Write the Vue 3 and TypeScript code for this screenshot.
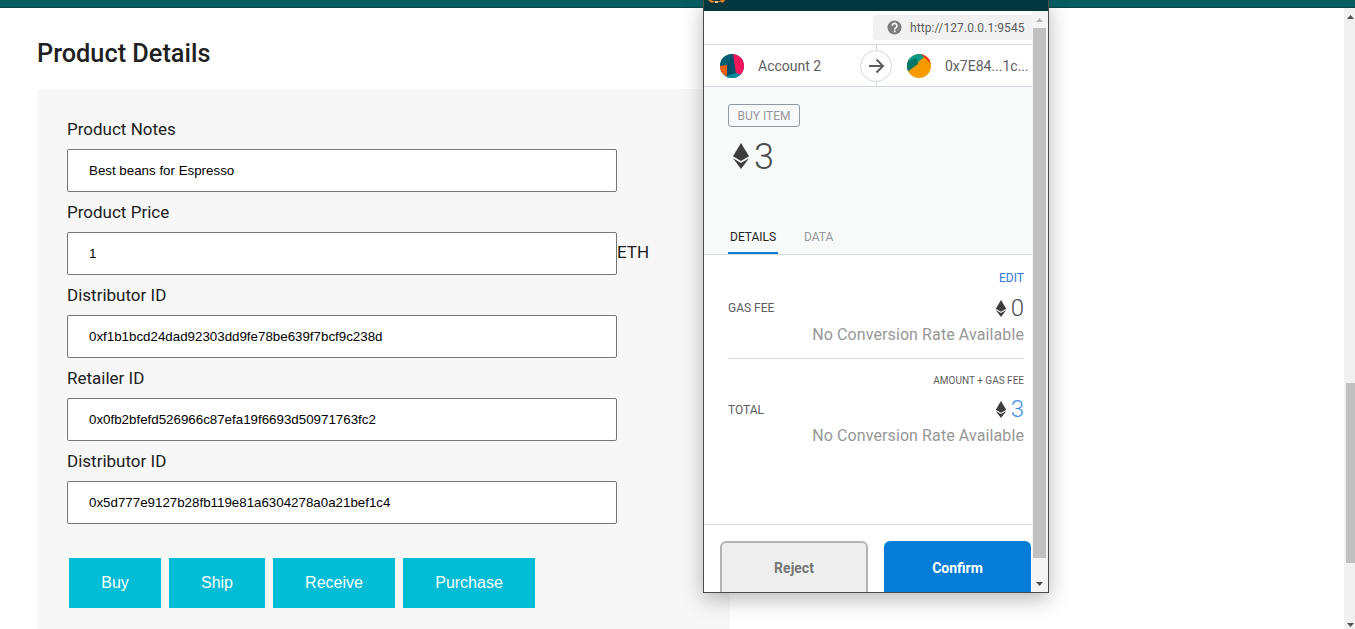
<script setup lang="ts">
const fields = [
  { label: 'Product Notes', value: 'Best beans for Espresso' },
  { label: 'Product Price', value: '1', unit: 'ETH' },
  { label: 'Distributor ID', value: '0xf1b1bcd24dad92303dd9fe78be639f7bcf9c238d' },
  { label: 'Retailer ID', value: '0x0fb2bfefd526966c87efa19f6693d50971763fc2' },
  { label: 'Distributor ID', value: '0x5d777e9127b28fb119e81a6304278a0a21bef1c4' },
]
const actions = ['Buy', 'Ship', 'Receive', 'Purchase']
</script>

<template>
  <div class="page">
    <div class="topbar"></div>
    <main class="main">
      <h2 class="title">Product Details</h2>
      <section class="card">
        <div v-for="(f, i) in fields" :key="i" class="field">
          <div class="label">{{ f.label }}</div>
          <div class="control">
            <input class="input" type="text" :value="f.value" readonly />
            <span v-if="f.unit" class="unit">{{ f.unit }}</span>
          </div>
        </div>
        <div class="actions">
          <button v-for="a in actions" :key="a" class="action" type="button">{{ a }}</button>
        </div>
      </section>
    </main>

    <div class="page-scroll">
      <svg class="arrow up" width="7" height="4" viewBox="0 0 7 4"><path d="M3.5 0 7 4H0z" /></svg>
      <div class="page-thumb"></div>
      <svg class="arrow down" width="7" height="4" viewBox="0 0 7 4"><path d="M0 0h7L3.5 4z" /></svg>
    </div>

    <aside class="popup">
      <div class="popup-head">
        <svg class="fox" width="17" height="3" viewBox="0 0 17 3">
          <path d="M0 0h4l1 1h7l1-1h4l-1 2-2 1-1-1H6L4 3 2 2z" fill="#d9791f" />
          <rect x="7" y="1" width="3" height="2" fill="#f0c090" />
        </svg>
      </div>
      <div class="popup-body">
        <div class="popup-content">
          <div class="origin-row">
            <div class="origin">
              <svg width="15" height="15" viewBox="0 0 15 15">
                <circle cx="7.5" cy="7.5" r="7" fill="#7d7d7d" />
                <path d="M5.2 5.8a2.4 2.4 0 1 1 3.6 2.1c-.8.5-1.1.8-1.1 1.5" fill="none" stroke="#fff" stroke-width="1.6" />
                <rect x="6.8" y="10.4" width="1.8" height="1.8" fill="#fff" />
              </svg>
              <span>http://127.0.0.1:9545</span>
            </div>
          </div>

          <div class="accounts">
            <div class="acct from">
              <svg class="blockie" width="24" height="24" viewBox="0 0 24 24">
                <defs><clipPath id="c1"><circle cx="12" cy="12" r="12" /></clipPath></defs>
                <g clip-path="url(#c1)">
                  <rect width="24" height="24" fill="#034f68" />
                  <path d="M0 0h12L7 11 0 12z" fill="#04606f" />
                  <path d="M13 0h11v22l-8-2z" fill="#f5165c" />
                  <path d="M0 12l7-1v11l-4-2-3-4z" fill="#f2620a" />
                  <path d="M7 22l9-3 8 3v2H7z" fill="#058f9e" />
                </g>
              </svg>
              <span>Account 2</span>
            </div>
            <div class="connector">
              <svg width="32" height="32" viewBox="0 0 32 32">
                <circle cx="16" cy="16" r="15.5" fill="#fff" stroke="#d2d8dd" />
                <path d="M9 16h14M16.5 9.5l6.5 6.5-6.5 6.5" fill="none" stroke="#5e5e5e" stroke-width="2" />
              </svg>
            </div>
            <div class="acct to">
              <svg class="blockie" width="24" height="24" viewBox="0 0 24 24">
                <defs><clipPath id="c2"><circle cx="12" cy="12" r="12" /></clipPath></defs>
                <g clip-path="url(#c2)">
                  <rect width="24" height="24" fill="#f79a00" />
                  <path d="M0 18V0h17v3z" fill="#0a9a8a" />
                  <path d="M0 18V7l10-3 1 6z" fill="#047868" />
                  <path d="M14 0h10v10l-7-7z" fill="#e8300e" />
                </g>
              </svg>
              <span>0x7E84...1c...</span>
            </div>
          </div>

          <div class="summary">
            <span class="badge">BUY ITEM</span>
            <div class="amount">
              <svg width="16" height="26" viewBox="0 0 16 26">
                <path d="M8 0 16 13.2 8 18 0 13.2z" fill="#3d3d3d" />
                <path d="M0 15.2 8 20l8-4.8L8 26z" fill="#3d3d3d" />
              </svg>
              <span>3</span>
            </div>
            <div class="tabs">
              <span class="tab active">DETAILS</span>
              <span class="tab">DATA</span>
            </div>
          </div>

          <div class="details">
            <div class="block first">
              <div class="hint link">EDIT</div>
              <div class="row">
                <span class="row-label">GAS FEE</span>
                <span class="value">
                  <svg width="12" height="17" viewBox="0 0 16 26">
                    <path d="M8 0 16 13.2 8 18 0 13.2z" fill="#3d3d3d" />
                    <path d="M0 15.2 8 20l8-4.8L8 26z" fill="#3d3d3d" />
                  </svg>
                  <span>0</span>
                </span>
              </div>
              <div class="rate">No Conversion Rate Available</div>
            </div>
            <div class="block second">
              <div class="hint small">AMOUNT + GAS FEE</div>
              <div class="row">
                <span class="row-label">TOTAL</span>
                <span class="value blue">
                  <svg width="12" height="17" viewBox="0 0 16 26">
                    <path d="M8 0 16 13.2 8 18 0 13.2z" fill="#3d3d3d" />
                    <path d="M0 15.2 8 20l8-4.8L8 26z" fill="#3d3d3d" />
                  </svg>
                  <span>3</span>
                </span>
              </div>
              <div class="rate">No Conversion Rate Available</div>
            </div>
          </div>

          <div class="footer">
            <button class="btn reject" type="button">Reject</button>
            <button class="btn confirm" type="button">Confirm</button>
          </div>
        </div>

        <div class="popup-scroll">
          <svg class="arrow up" width="7" height="4" viewBox="0 0 7 4"><path d="M3.5 0 7 4H0z" /></svg>
          <div class="popup-thumb"></div>
          <svg class="arrow down" width="7" height="4" viewBox="0 0 7 4"><path d="M0 0h7L3.5 4z" /></svg>
        </div>
      </div>
    </aside>
  </div>
</template>

<style>
html, body { margin: 0; padding: 0; height: 629px; overflow: hidden; background: #fff; }
</style>

<style scoped>
* { box-sizing: border-box; }
.page {
  position: relative;
  width: 1355px;
  height: 629px;
  overflow: hidden;
  background: #fff;
  font-family: Roboto, "Liberation Sans", sans-serif;
}
.topbar { height: 8px; background: #055d63; border-bottom: 1px solid #034549; }
.main { padding: 27px 0 0 37px; width: 730px; }
.title {
  margin: 0;
  height: 54px;
  line-height: 37px;
  font-size: 25.3px;
  font-weight: 500;
  color: #212121;
}
.card {
  height: 560px;
  padding: 20px 30px 0;
  background: #f7f7f7;
  border-radius: 4px 0 0 0;
}
.label { height: 40px; line-height: 40px; font-size: 17px; color: #212121; }
.control { display: flex; align-items: center; }
.input {
  width: 550px;
  height: 43px;
  padding: 0 21px;
  border: 1px solid #767676;
  border-radius: 2px;
  background: #fff;
  outline: none;
  font-family: "Liberation Sans", Arial, sans-serif;
  font-size: 13.33px;
  color: #000;
}
.unit { margin-top: -4px; font-size: 17px; color: #212121; }
.actions {
  display: grid;
  grid-template-columns: 92px 96px 122px 132px;
  gap: 8px;
  margin: 34px 0 0 2px;
}
.action {
  height: 50px;
  padding: 0;
  border: none;
  background: #00bcd4;
  color: #fff;
  font-family: "Liberation Sans", Arial, sans-serif;
  font-size: 16px;
}
.page-scroll {
  position: absolute;
  top: 8px;
  right: 0;
  bottom: 0;
  width: 11px;
  background: #f0f0f0;
}
.page-thumb {
  position: absolute;
  top: 375px;
  left: 2px;
  right: 0;
  height: 180px;
  background: #c0c0c0;
}
.arrow { position: absolute; fill: #505050; }
.page-scroll .arrow { left: 3px; }
.page-scroll .up { top: 7px; }
.page-scroll .down { bottom: 2px; }

.popup {
  position: absolute;
  top: 0;
  left: 703px;
  width: 346px;
  height: 593px;
  display: flex;
  flex-direction: column;
  overflow: hidden;
  background: #fff;
  border: 1px solid #4a4a4a;
  border-top: none;
  box-shadow: 0 6px 20px rgba(0, 0, 0, 0.28);
}
.popup-head { position: relative; height: 11px; flex: none; background: #00363d; }
.fox { position: absolute; left: 4px; top: 0; }
.popup-body { flex: 1; min-height: 0; display: flex; }
.popup-content { width: 328px; flex: none; display: flex; flex-direction: column; }
.popup-scroll {
  position: relative;
  flex: 1;
  background: #f4f4f4;
}
.popup-thumb {
  position: absolute;
  top: 17px;
  left: 1px;
  right: 2px;
  height: 530px;
  background: #c0c0c0;
}
.popup-scroll .arrow { left: 4px; }
.popup-scroll .up { top: 7px; fill: #b5b5b5; }
.popup-scroll .down { bottom: 6px; }

.origin-row {
  height: 34px;
  flex: none;
  padding-top: 4px;
  display: flex;
  justify-content: flex-end;
  border-bottom: 1px solid #d2d8dd;
}
.origin {
  width: 159px;
  height: 25px;
  padding-left: 14px;
  display: flex;
  align-items: center;
  gap: 8px;
  background: #f1f1f1;
  border-radius: 4px 0 0 4px;
  font-size: 12px;
  letter-spacing: 0.1px;
  color: #5d5d5d;
}
.accounts {
  position: relative;
  height: 42px;
  flex: none;
  display: flex;
  align-items: center;
  border-bottom: 1px solid #d2d8dd;
  font-size: 14px;
  color: #5d5d5d;
}
.acct { display: flex; align-items: center; }
.blockie { flex: none; }
.from { width: 203px; padding-left: 16px; gap: 14px; }
.to { gap: 14px; }
.connector {
  position: absolute;
  left: 156px;
  top: 0;
  width: 32px;
  height: 41px;
  display: flex;
  align-items: center;
  background: linear-gradient(#d2d8dd, #d2d8dd) center / 1px 100% no-repeat;
}
.summary {
  position: relative;
  height: 168px;
  flex: none;
  padding: 17px 24px 0;
  background: #f8fafa;
  border-bottom: 1px solid #d2d8dd;
}
.badge {
  display: inline-block;
  height: 23px;
  width: 72px;
  line-height: 22px;
  text-align: center;
  border: 1px solid #8f9aa2;
  border-radius: 3px;
  font-size: 12px;
  color: #979797;
}
.amount {
  display: flex;
  align-items: center;
  gap: 5px;
  margin: 15px 0 0 5px;
  height: 28px;
  font-size: 36px;
  font-weight: 300;
  line-height: 30px;
  color: #4d4d4d;
}
.amount span { margin-top: 2px; }
.tabs {
  position: absolute;
  left: 24px;
  bottom: 0;
  display: flex;
  gap: 24px;
}
.tab {
  height: 33px;
  line-height: 32px;
  padding: 0 2px;
  font-size: 12px;
  color: #979797;
}
.tab.active { width: 50px; color: #222; border-bottom: 2px solid #037dd6; }
.details { height: 270px; flex: none; padding: 0 8px 0 24px; border-bottom: 1px solid #d2d8dd; }
.block { display: flex; flex-direction: column; }
.first { height: 104px; padding-top: 16px; border-bottom: 1px solid #d2d8dd; }
.second { padding-top: 15px; }
.first .row { margin-top: 8px; }
.second .row { margin-top: 6px; }
.second .rate { margin-top: 1px; }
.second .row-label { margin-top: 2px; }
.hint { text-align: right; height: 14px; line-height: 14px; font-size: 12px; }
.link { color: #2f7bd9; }
.small { font-size: 10px; color: #5d5d5d; }
.row {
  display: flex;
  justify-content: space-between;
  align-items: center;
  height: 30px;
}
.row-label { font-size: 12px; color: #5d5d5d; }
.value {
  display: flex;
  align-items: center;
  gap: 4px;
  font-size: 24px;
  font-weight: 300;
  color: #4d4d4d;
}
.value.blue { color: #3f8fe8; }
.rate {
  height: 22px;
  margin-top: 1px;
  line-height: 22px;
  text-align: right;
  font-size: 16px;
  letter-spacing: 0.1px;
  color: #979797;
}
.footer {
  flex: 1;
  display: flex;
  gap: 16px;
  padding: 16px 0 0 16px;
  overflow: hidden;
}
.btn {
  flex: none;
  width: 148px;
  height: 60px;
  padding: 0 0 6px;
  border-radius: 6px;
  font-family: Roboto, sans-serif;
  font-size: 14px;
  font-weight: 700;
}
.reject { border: 2px solid #b4b4b4; background: #efefef; color: #767676; }
.confirm { width: 147px; border: none; background: #037dd6; color: #fff; }
</style>
